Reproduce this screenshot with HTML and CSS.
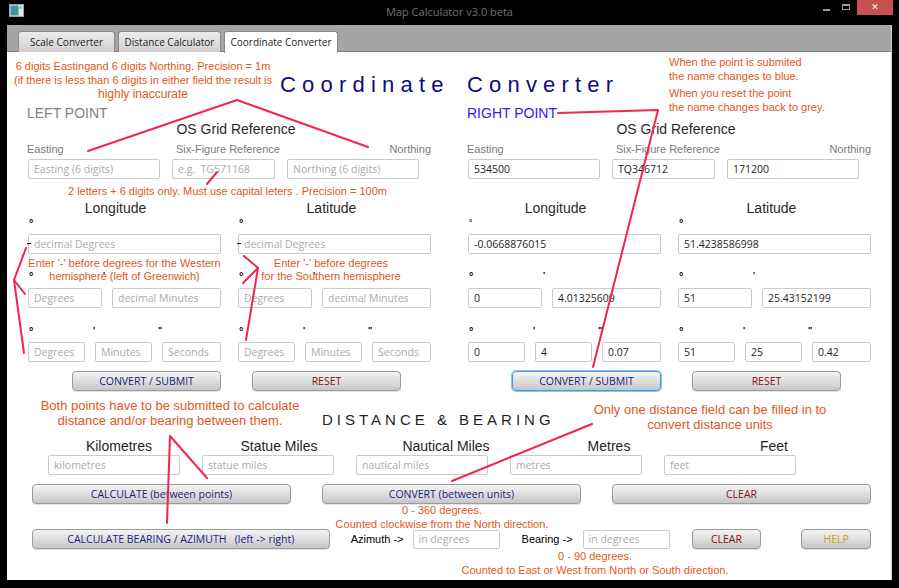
FILE: index.html
```html
<!DOCTYPE html>
<html lang="en">
<head>
<meta charset="utf-8">
<title>Map Calculator v3.0 beta</title>
<link rel="stylesheet" href="styles.css">
</head>
<body>
<div class="window">
  <header class="titlebar">
    <div class="tb-left">
      <svg class="app-icon" width="15" height="13" viewBox="0 0 15 13">
        <defs>
          <linearGradient id="ig" x1="0" y1="0" x2="1" y2="1">
            <stop offset="0" stop-color="#4f86b8"/>
            <stop offset="1" stop-color="#3fa07a"/>
          </linearGradient>
        </defs>
        <rect x="0.5" y="0.5" width="14" height="12" fill="#dfe6ea" stroke="#9aa4aa"/>
        <rect x="1.5" y="1.5" width="8" height="10" fill="url(#ig)"/>
        <rect x="10.5" y="2" width="2.5" height="3" fill="#a8c8a8"/>
      </svg>
    </div>
    <div class="title">Map Calculator v3.0 beta</div>
    <div class="tb-right">
      <span class="ctl-min"></span>
      <span class="ctl-max"></span>
      <span class="ctl-close">✕</span>
    </div>
  </header>

  <div class="frame">
    <nav class="tabbar">
      <div class="tab">Scale Converter</div>
      <div class="tab">Distance Calculator</div>
      <div class="tab active">Coordinate Converter</div>
    </nav>

    <main class="content">
      <div class="title-row"><h1 class="main-title">Coordinate Converter</h1></div>

      <div class="points">
        <section class="point">
          <div class="point-name">LEFT POINT</div>
          <div class="os-head">OS Grid Reference</div>
          <div class="os-labels"><span class="lab-e">Easting</span><span class="lab-s">Six-Figure Reference</span><span class="lab-n">Northing</span></div>
          <div class="os-inputs">
            <input class="field" placeholder="Easting (6 digits)">
            <input class="field" placeholder="e.g.  TG571168">
            <input class="field" placeholder="Northing (6 digits)">
          </div>
          <div class="ll-head"><span class="h-lon">Longitude</span><span class="h-lat">Latitude</span></div>
          <div class="deg-row r1"><div class="deg-col"><span class="deg">°</span></div><div class="deg-col"><span class="deg">°</span></div></div>
          <div class="pair">
            <input class="field" placeholder="decimal Degrees">
            <input class="field" placeholder="decimal Degrees">
          </div>
          <div class="deg-row r2"><div class="deg-col"><span class="deg">°</span><span class="min m2">'</span></div><div class="deg-col"><span class="deg">°</span><span class="min m2">'</span></div></div>
          <div class="pair">
            <div class="dm"><input class="field" placeholder="Degrees"><input class="field" placeholder="decimal Minutes"></div>
            <div class="dm"><input class="field" placeholder="Degrees"><input class="field" placeholder="decimal Minutes"></div>
          </div>
          <div class="deg-row r3"><div class="deg-col"><span class="deg">°</span><span class="min m3">'</span><span class="sec">"</span></div><div class="deg-col"><span class="deg">°</span><span class="min m3">'</span><span class="sec">"</span></div></div>
          <div class="pair">
            <div class="dms"><input class="field" placeholder="Degrees"><input class="field" placeholder="Minutes"><input class="field" placeholder="Seconds"></div>
            <div class="dms"><input class="field" placeholder="Degrees"><input class="field" placeholder="Minutes"><input class="field" placeholder="Seconds"></div>
          </div>
          <div class="btn-row">
            <button class="btn blue w149">CONVERT / SUBMIT</button>
            <button class="btn red w149">RESET</button>
          </div>
        </section>

        <section class="point">
          <div class="point-name submitted">RIGHT POINT</div>
          <div class="os-head">OS Grid Reference</div>
          <div class="os-labels"><span class="lab-e">Easting</span><span class="lab-s">Six-Figure Reference</span><span class="lab-n">Northing</span></div>
          <div class="os-inputs">
            <input class="field" value="534500">
            <input class="field" value="TQ346712">
            <input class="field" value="171200">
          </div>
          <div class="ll-head"><span class="h-lon">Longitude</span><span class="h-lat">Latitude</span></div>
          <div class="deg-row r1"><div class="deg-col"><span class="deg tiny">°</span></div><div class="deg-col"><span class="deg">°</span></div></div>
          <div class="pair">
            <input class="field" value="-0.0668876015">
            <input class="field" value="51.4238586998">
          </div>
          <div class="deg-row r2"><div class="deg-col"><span class="deg">°</span><span class="min m2">'</span></div><div class="deg-col"><span class="deg">°</span><span class="min m2">'</span></div></div>
          <div class="pair">
            <div class="dm"><input class="field" value="0"><input class="field" value="4.01325609"></div>
            <div class="dm"><input class="field" value="51"><input class="field" value="25.43152199"></div>
          </div>
          <div class="deg-row r3"><div class="deg-col"><span class="deg">°</span><span class="min m3">'</span><span class="sec">"</span></div><div class="deg-col"><span class="deg">°</span><span class="min m3">'</span><span class="sec">"</span></div></div>
          <div class="pair">
            <div class="dms"><input class="field" value="0"><input class="field" value="4"><input class="field" value="0.07"></div>
            <div class="dms"><input class="field" value="51"><input class="field" value="25"><input class="field" value="0.42"></div>
          </div>
          <div class="btn-row">
            <button class="btn blue w149 focused">CONVERT / SUBMIT</button>
            <button class="btn red w149">RESET</button>
          </div>
        </section>
      </div>

      <section class="dist">
        <h2 class="dist-title">DISTANCE &amp; BEARING</h2>
        <div class="unit-labels">
          <span class="ul u1">Kilometres</span>
          <span class="ul u2">Statue Miles</span>
          <span class="ul u3">Nautical Miles</span>
          <span class="ul u4">Metres</span>
          <span class="ul u5">Feet</span>
        </div>
        <div class="unit-inputs">
          <input class="field" placeholder="kilometres">
          <input class="field" placeholder="statue miles">
          <input class="field" placeholder="nautical miles">
          <input class="field" placeholder="metres">
          <input class="field" placeholder="feet">
        </div>
        <div class="dist-buttons">
          <button class="btn blue">CALCULATE (between points)</button>
          <button class="btn blue">CONVERT (between units)</button>
          <button class="btn red">CLEAR</button>
        </div>
        <div class="bearing-row">
          <button class="btn blue w299">CALCULATE BEARING / AZIMUTH   (left -&gt; right)</button>
          <span class="blabel az">Azimuth -&gt;</span>
          <input class="field deg-field f-az" placeholder="in degrees">
          <span class="blabel br">Bearing -&gt;</span>
          <input class="field deg-field f-br" placeholder="in degrees">
          <button class="btn red w70 b-clear">CLEAR</button>
          <button class="btn gold w70 b-help">HELP</button>
        </div>
      </section>
    </main>
  </div>

  <div class="note n-top">6 digits Eastingand 6 digits Northing. Precision = 1m<br>(if there is less than 6 digits in either field the result is<br><span class="big">highly inaccurate</span></div>
  <div class="note n-right1">When the point is submited<br>the name changes to blue.</div>
  <div class="note n-right2">When you reset the point<br>the name changes back to grey.</div>
  <div class="note n-six">2 letters + 6 digits only. Must use capital leters . Precision = 100m</div>
  <div class="note n-west">Enter '-' before degrees for the Western<br>hemisphere (left of Greenwich)</div>
  <div class="note n-south">Enter '-' before degrees<br>for the Southern hemisphere</div>
  <div class="note n-both">Both points have to be submitted to calculate<br>distance and/or bearing between them.</div>
  <div class="note n-only">Only one distance field can be filled in to<br>convert distance units</div>
  <div class="note n-az">0 - 360 degrees.<br>Counted clockwise from the North direction.</div>
  <div class="note n-br">0 - 90 degrees.<br>Counted to East or West from North or South direction.</div>

  <svg class="arrows" width="899" height="588" viewBox="0 0 899 588">
    <g class="dash">
      <line x1="27" y1="243.5" x2="31" y2="243.5"/>
      <line x1="237" y1="243.5" x2="241" y2="243.5"/>
    </g>
    <g class="red">
      <polyline points="88,151 237,100 368,147"/>
      <line x1="207" y1="184" x2="217" y2="172"/>
      <polyline points="26,248 14,280 25,294"/>
      <line x1="14" y1="280" x2="24" y2="353"/>
      <polyline points="244,256 258,268 243,283"/>
      <line x1="258" y1="268" x2="246" y2="340"/>
      <polyline points="558,113 658,110 593,367"/>
      <polyline points="207,478 170,436 167,523"/>
      <line x1="592" y1="424" x2="452" y2="481"/>
    </g>
  </svg>
</div>
</body>
</html>
```

FILE: styles.css
```css
* { box-sizing: border-box; }

html, body {
  margin: 0;
  padding: 0;
  background: #000;
}

body {
  font-family: "Liberation Sans", Arial, sans-serif;
  color: #222;
}

.window {
  position: relative;
  width: 899px;
  height: 588px;
  background: #000;
  overflow: hidden;
}

/* ---------- title bar ---------- */
.titlebar {
  height: 25px;
  display: grid;
  grid-template-columns: 1fr auto 1fr;
  align-items: start;
}

.tb-left { padding: 4px 0 0 9px; }
.app-icon { display: block; }

.title {
  font-family: "Open Sans", sans-serif;
  font-size: 11px;
  line-height: 14px;
  color: #707070;
  padding-top: 5px;
}

.tb-right {
  display: flex;
  justify-content: flex-end;
  align-items: flex-start;
  padding-right: 6px;
}

.ctl-min {
  width: 7px;
  height: 2px;
  margin-top: 9px;
  background: #9a9a9a;
}

.ctl-max {
  width: 8px;
  height: 6px;
  margin: 4px 0 0 12px;
  border: 1px solid #9a9a9a;
  border-top-width: 2px;
}

.ctl-close {
  width: 36px;
  height: 15px;
  margin-left: 7px;
  background: #c75050;
  color: #fff;
  font-family: "DejaVu Sans", sans-serif;
  font-size: 9px;
  font-weight: bold;
  line-height: 15px;
  text-align: center;
}

/* ---------- frame / tabs ---------- */
.frame {
  margin-left: 7px;
  width: 885px;
  border-right: 1px solid #cfcfcf;
}

.tabbar {
  height: 27px;
  background: #a5a5a5;
  display: flex;
  align-items: flex-end;
  gap: 3px;
  padding-left: 11px;
  box-shadow: inset 0 -1px 0 #7f7f7f;
}

.tab {
  height: 21px;
  padding: 0;
  border: 1px solid #8a8a8a;
  border-bottom: none;
  border-radius: 3px 3px 0 0;
  background: linear-gradient(#ececec, #d0d0d0);
  font-family: "Open Sans", sans-serif;
  font-size: 10px;
  line-height: 20px;
  color: #222;
  white-space: nowrap;
  text-align: center;
}

.tab:nth-child(1) { width: 97px; }
.tab:nth-child(2) { width: 103px; }
.tab.active {
  width: 114px;
  background: #fff;
  height: 22px;
  margin-bottom: -1px;
  position: relative;
}

.content {
  width: 884px;
  height: 528px;
  background: #fff;
  padding: 0 20px 0 21px;
}

/* ---------- main title ---------- */
.title-row { height: 52px; }

.main-title {
  margin: 0;
  padding: 20px 0 0 252px;
  font-size: 22px;
  line-height: 26px;
  font-weight: normal;
  letter-spacing: 6.2px;
  word-spacing: 5px;
  color: #0c0c7c;
  white-space: nowrap;
}

/* ---------- points ---------- */
.points {
  display: grid;
  grid-template-columns: 403px 403px;
  column-gap: 37px;
}

.point-name {
  margin-top: 1px;
  font-size: 14px;
  line-height: 16px;
  color: #828282;
  margin-left: -1px;
}
.point-name.submitted { color: #2d17f7; }

.os-head {
  font-size: 14px;
  line-height: 16px;
  text-align: center;
  padding-left: 13px;
  color: #2a2a2a;
}

.os-labels {
  margin-top: 6px;
  display: flex;
  font-size: 11px;
  line-height: 13px;
  color: #7b7b7b;
}
.lab-e { width: 149px; margin-left: -1px; }
.lab-s { flex: 1; }
.lab-n { text-align: right; }

.os-inputs {
  margin-top: 3px;
  display: grid;
  grid-template-columns: 132px 103px 132px;
  column-gap: 12px;
}

.field {
  display: block;
  width: 100%;
  height: 20px;
  margin: 0;
  padding: 0 0 0 5px;
  border: 1px solid #cbcbcb;
  border-radius: 2px;
  background: #fff;
  font-family: "Open Sans", sans-serif;
  font-size: 10.5px;
  color: #1e1e1e;
  outline: none;
}
.field::placeholder { color: #ababab; }

.ll-head {
  margin-top: 21px;
  display: grid;
  grid-template-columns: 193px 193px;
  column-gap: 17px;
  font-size: 14px;
  line-height: 16px;
  color: #2a2a2a;
  text-align: center;
}
.h-lon { padding-right: 18px; }
.h-lat { padding-right: 6px; }

.deg-row {
  display: grid;
  grid-template-columns: 193px 193px;
  column-gap: 17px;
  font-size: 11px;
  font-weight: bold;
  line-height: 14px;
  color: #000;
}
.deg-row.r1 { height: 18px; }
.deg-row.r2 { height: 34px; padding-top: 15px; }
.deg-row.r3 { height: 34px; padding-top: 16px; }

.deg-col { display: flex; }
.deg { width: 8px; margin-left: 1px; }
.deg.tiny { font-size: 8px; }
.min, .sec {
  font-size: 9px;
  font-weight: bold;
  line-height: 12px;
  color: #000;
}
.m2 { margin-left: 66px; }
.m3 { margin-left: 56px; width: 65px; }

.pair {
  display: grid;
  grid-template-columns: 193px 193px;
  column-gap: 17px;
}

.dm {
  display: grid;
  grid-template-columns: 74px 109px;
  column-gap: 10px;
}

.dms {
  display: grid;
  grid-template-columns: 57px 57px 59px;
  column-gap: 10px;
}

.btn-row {
  margin-top: 9px;
  padding-left: 44px;
  display: flex;
  gap: 31px;
}

/* ---------- buttons ---------- */
.btn {
  height: 20px;
  margin: 0;
  padding: 0;
  border: 1px solid #9b9b9b;
  border-radius: 4px;
  background: linear-gradient(#f4f4f4, #dcdcdc 55%, #c6c6c6);
  font-family: "Open Sans", sans-serif;
  font-size: 10.5px;
  line-height: 18px;
  white-space: pre;
  box-shadow: 0 1px 1px rgba(0,0,0,0.12);
}
.btn.blue { color: #1b1b86; }
.btn.red { color: #8a1111; }
.btn.gold { color: #c9a023; }
.btn.w149 { width: 149px; }
.btn.w299 { width: 299px; }
.btn.w70 { width: 70px; }
.btn.focused {
  border-color: #4a97dc;
  box-shadow: 0 0 0 1px #8cc4f2;
}

/* ---------- distance & bearing ---------- */
.dist-title {
  margin: 20px 0 0 0;
  padding-left: 294px;
  font-size: 15px;
  line-height: 17px;
  font-weight: normal;
  letter-spacing: 4px;
  color: #1f1f1f;
  white-space: pre;
}

.unit-labels {
  margin-top: 10px;
  display: flex;
  font-size: 14px;
  line-height: 16px;
  color: #1f1f1f;
}
.ul { width: 150px; text-align: center; }
.u1 { margin-left: 16px; }
.u2 { margin-left: 10px; }
.u3 { margin-left: 17px; }
.u4 { margin-left: 13px; }
.u5 { margin-left: 15px; }

.unit-inputs {
  margin-top: 1px;
  padding-left: 20px;
  display: grid;
  grid-template-columns: repeat(5, 132px);
  column-gap: 22px;
}

.dist-buttons {
  margin-top: 9px;
  padding-left: 4px;
  display: grid;
  grid-template-columns: repeat(3, 259px);
  column-gap: 31px;
}

.bearing-row {
  margin-top: 25px;
  padding-left: 4px;
  display: flex;
  align-items: center;
}

.blabel {
  font-size: 11px;
  line-height: 14px;
  color: #000;
  white-space: nowrap;
}
.az { margin-left: 21px; }
.br { margin-left: 22px; }

.deg-field { width: 87px; height: 19px; }
.f-az { margin-left: 9px; }
.f-br { margin-left: 10px; }
.b-clear { margin-left: 22px; }
.b-help { margin-left: 40px; }

/* ---------- annotations (callouts drawn over the UI) ---------- */
.note {
  position: absolute;
  font-family: "Liberation Sans", Arial, sans-serif;
  font-size: 11px;
  line-height: 14px;
  color: #e0581b;
  white-space: nowrap;
}
.note .big { font-size: 12px; line-height: 15px; }

.n-top { left: 13px; top: 59px; width: 260px; text-align: center; }
.n-right1 { left: 669px; top: 55px; }
.n-right2 { left: 669px; top: 86px; }
.n-six { left: 68px; top: 184px; }
.n-west { left: 24px; top: 257px; width: 201px; text-align: center; line-height: 13px; }
.n-south { left: 256px; top: 257px; width: 150px; text-align: center; line-height: 13px; }
.n-both { left: 20px; top: 398px; width: 300px; text-align: center; font-size: 13px; line-height: 15px; }
.n-only { left: 560px; top: 402px; width: 300px; text-align: center; font-size: 13px; line-height: 15px; }
.n-az { left: 292px; top: 503px; width: 300px; text-align: center; }
.n-br { left: 445px; top: 549px; width: 300px; text-align: center; }

.arrows {
  position: absolute;
  left: 0;
  top: 0;
  pointer-events: none;
}
.arrows .red polyline,
.arrows .red line {
  fill: none;
  stroke: #f3264c;
  stroke-width: 2;
  stroke-linecap: round;
  stroke-linejoin: round;
}
.arrows .dash line {
  stroke: #111;
  stroke-width: 1;
}
```
